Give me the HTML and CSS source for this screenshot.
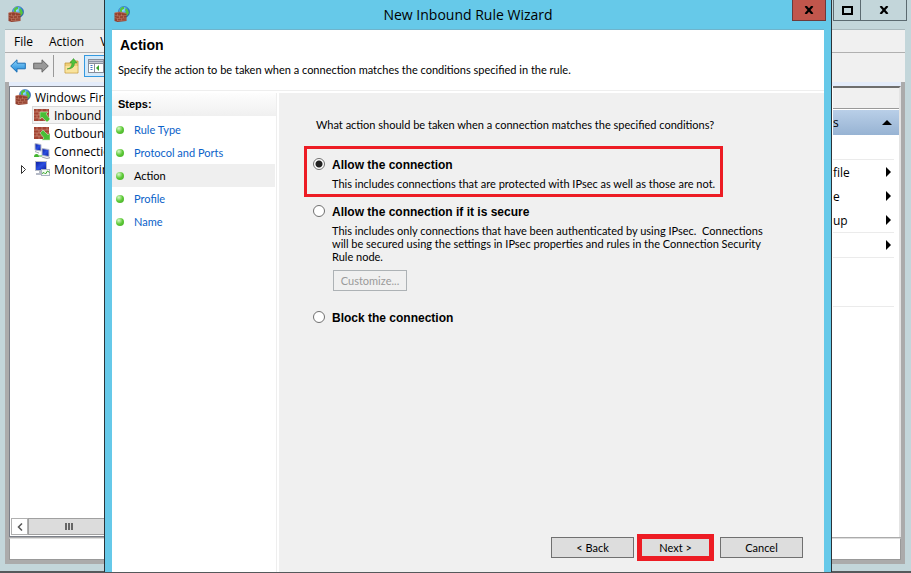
FILE: index.html
```
<!DOCTYPE html>
<html lang="en">
<head>
  <meta charset="UTF-8"/>
  <meta name="viewport" content="width=device-width, initial-scale=1.0"/>
  <title>New Inbound Rule Wizard</title>
  <link rel="stylesheet" href="styles.css">
</head>
<body>
  <svg class="defs" aria-hidden="true">
    <defs>
      <radialGradient id="globeFill" cx="0.4" cy="0.3" r="0.8">
        <stop offset="0" stop-color="#a9e4ff"/>
        <stop offset="0.5" stop-color="#2f8fe0"/>
        <stop offset="1" stop-color="#0a3c9c"/>
      </radialGradient>
      <linearGradient id="screenFill" x1="0" y1="0" x2="1" y2="1">
        <stop offset="0" stop-color="#0a1a9c"/>
        <stop offset="0.5" stop-color="#2b4fe0"/>
        <stop offset="1" stop-color="#0a1a9c"/>
      </linearGradient>
      <linearGradient id="blueFill" x1="0" y1="0" x2="0" y2="1">
        <stop offset="0" stop-color="#8fd4fa"/>
        <stop offset="1" stop-color="#1a86d8"/>
      </linearGradient>
      <symbol id="firewall" viewBox="0 0 16 16">
        <circle cx="10" cy="6" r="5.600" fill="url(#globeFill)" stroke="#2a5fa8" stroke-width="0.5"/>
        <path d="M6 3l2-2 2 0 0 2-2 1 0 2-2 0zM12 2l2 2 1 3-2 3-2-1 0-2 1-1-1-2z" fill="#54c43c"/>
        <path d="M0.500 7l5-1 7 1.500v7.500l-9 1-3-1z" fill="#93402f"/>
        <path d="M0.500 9l3 1 9-0.500M0.500 11.500l3 1 9-0.500M3.500 14.500l9-0.500M3.500 7.500v2.500M7.500 7.500v2.500M5.500 10v2.300M9.500 10v2M3.500 12.500v2.500M7.500 12.500v2" fill="none" stroke="#d79a80" stroke-width="0.4"/>
        <path d="M0.500 7l5-1 7 1.500" fill="none" stroke="#c67055" stroke-width="0.8"/>
      </symbol>
      <symbol id="wall" viewBox="0 0 16 16">
        <rect x="0" y="2" width="15" height="12" fill="#a34433"/>
        <path d="M0 5h15M0 8h15M0 11h15M3 2v3M8 2v3M13 2v3M5 5v3M10 5v3M3 8v3M8 8v3M13 8v3M5 11v3M10 11v3" stroke="#dba692" stroke-width="0.5"/>
      </symbol>
      <symbol id="inbound" viewBox="0 0 16 16">
        <use href="#wall"/>
        <path d="M6 5h8l-2 2 4 5-3 3-5-5-2 2z" fill="#48bf35" stroke="#c8eab8" stroke-width="0.6"/>
      </symbol>
      <symbol id="outbound" viewBox="0 0 16 16">
        <use href="#wall"/>
        <path d="M16 15H8l2-2-4-5 3-3 5 5 2-2z" fill="#48bf35" stroke="#c8eab8" stroke-width="0.6"/>
      </symbol>
      <symbol id="computers" viewBox="0 0 16 16">
        <path d="M1 0.500l6 1v6.500l-6-1z" fill="url(#screenFill)" stroke="#b9bdc8"/>
        <path d="M8 5.500l7 1v7l-7-1z" fill="url(#screenFill)" stroke="#b9bdc8"/>
        <path d="M8 14l5 1.500 3-1" fill="none" stroke="#a5a9b2" stroke-width="1.200"/>
        <path d="M1 8.500l4 1.500" stroke="#a5a9b2"/>
        <path d="M0 14q0-3 2.500-3t2.500 3z" fill="#42b52f"/>
        <path d="M5 13h3" stroke="#42b52f"/>
      </symbol>
      <symbol id="monitor" viewBox="0 0 16 16">
        <rect x="1.500" y="0.500" width="11" height="9" fill="url(#screenFill)" stroke="#b5bac6"/>
        <path d="M5 10h4v2h2v2H2v-2h3z" fill="#b5bac6"/>
        <rect x="7.500" y="8.500" width="8" height="6" fill="#f4fbf2" stroke="#a9b3c2"/>
        <path d="M8 12.500l2-1 1.500 1.500 2-3 2 1.500" fill="none" stroke="#35a52c"/>
      </symbol>
      <symbol id="arrow" viewBox="0 0 16 14">
        <path d="M0.700 7L7 0.800V4.200h8.300v5.600H7v3.400z"/>
      </symbol>
      <symbol id="folder" viewBox="0 0 16 16">
        <path d="M1 5h5l1-2h7v12H1z" fill="#efcf78" stroke="#c39a3c" stroke-width="0.8"/>
        <path d="M1.500 8h12v6.500h-12z" fill="#f9e39c"/>
        <path d="M3 11q5-1 5-6H6l3.500-4.500L13 5h-2.500q0 6-7.500 6z" fill="#4fc33b" stroke="#2e8e25" stroke-width="0.5"/>
      </symbol>
      <symbol id="console" viewBox="0 0 16 14">
        <rect x="0.500" y="0.500" width="15" height="13" fill="#fff" stroke="#888e9a"/>
        <path d="M1 2.500h14" stroke="#8d96a8" stroke-width="2"/>
        <path d="M1 4.500h14M6.500 4v10" stroke="#888e9a"/>
        <path d="M2.500 6.500h2M2.500 8.500h2M2.500 10.500h2" stroke="#4276c4"/>
        <path d="M11 6v6L8 9z" fill="#3aa52d"/>
      </symbol>
    </defs>
  </svg>

  <div class="desktop">
    <!-- firewall console -->
    <div class="window console">
      <header class="console-title">
        <svg class="icon"><use href="#firewall"/></svg>
        <div class="caption-buttons">
          <button class="caption" aria-label="Maximize"><svg width="11" height="9" viewBox="0 0 11 9"><rect x="1" y="1" width="9" height="7" fill="none" stroke="#000" stroke-width="2"/></svg></button>
          <button class="caption wide" aria-label="Close console"><svg width="10" height="8" viewBox="0 0 10 8"><path d="M1.500 0L8.500 8M8.500 0L1.500 8" stroke="#000" stroke-width="2.200"/></svg></button>
        </div>
      </header>
      <nav class="menubar">
        <button>File</button>
        <button>Action</button>
        <button>View</button>
      </nav>
      <div class="toolbar">
        <button aria-label="Back"><svg class="nav-arrow back"><use href="#arrow"/></svg></button>
        <button aria-label="Forward"><svg class="nav-arrow forward"><use href="#arrow"/></svg></button>
        <span class="divider"></span>
        <button aria-label="Up one level"><svg class="icon"><use href="#folder"/></svg></button>
        <button class="pressed" aria-label="Show console tree"><svg class="icon"><use href="#console"/></svg></button>
      </div>
      <div class="console-body">
        <div class="panes">
          <div class="tree-pane">
            <ul class="tree">
              <li class="root"><svg class="icon"><use href="#firewall"/></svg><span>Windows Firewall</span></li>
              <li class="selected"><svg class="icon"><use href="#inbound"/></svg><span>Inbound Rules</span></li>
              <li><svg class="icon"><use href="#outbound"/></svg><span>Outbound Rules</span></li>
              <li><svg class="icon"><use href="#computers"/></svg><span>Connection Security</span></li>
              <li class="closed"><svg class="expander" viewBox="0 0 6 9"><path d="M0.500 0.500v8l4-4z" fill="#fff" stroke="#333"/></svg><svg class="icon"><use href="#monitor"/></svg><span>Monitoring</span></li>
            </ul>
            <div class="scrollbar">
              <button aria-label="Scroll left"><svg width="6" height="8" viewBox="0 0 6 8"><path d="M5 0.500L1.500 4L5 7.500" fill="none" stroke="#555" stroke-width="1.500"/></svg></button>
              <div class="thumb"><i></i><i></i><i></i></div>
            </div>
          </div>
          <div class="actions-pane">
            <div class="pane-head"></div>
            <div class="pane-group"><span>s</span><svg width="10" height="5" viewBox="0 0 10 5"><path d="M5 0l5 5H0z"/></svg></div>
            <ul class="actions">
              <li class="gap"></li>
              <li><span>file</span><svg class="more" viewBox="0 0 5 10"><path d="M0 0l5 5-5 5z"/></svg></li>
              <li><span>e</span><svg class="more" viewBox="0 0 5 10"><path d="M0 0l5 5-5 5z"/></svg></li>
              <li><span>up</span><svg class="more" viewBox="0 0 5 10"><path d="M0 0l5 5-5 5z"/></svg></li>
              <li class="ruled"><span></span><svg class="more" viewBox="0 0 5 10"><path d="M0 0l5 5-5 5z"/></svg></li>
              <li class="gap ruled"></li>
              <li class="gap"></li>
            </ul>
          </div>
        </div>
        <div class="statusbar"></div>
      </div>
    </div>

    <div class="taskbar"></div>

    <!-- wizard -->
    <div class="window wizard">
      <header class="wizard-title">
        <svg class="icon"><use href="#firewall"/></svg>
        <h1>New Inbound Rule Wizard</h1>
        <button class="close" aria-label="Close"><svg width="10" height="8" viewBox="0 0 10 8"><path d="M1.500 0L8.500 8M8.500 0L1.500 8" stroke="#000" stroke-width="2.200"/></svg></button>
      </header>
      <div class="wizard-body">
        <div class="page-head">
          <h2>Action</h2>
          <p>Specify the action to be taken when a connection matches the conditions specified in the rule.</p>
        </div>
        <div class="columns">
          <nav class="steps">
            <h3>Steps:</h3>
            <ul>
              <li><a href="#">Rule Type</a></li>
              <li><a href="#">Protocol and Ports</a></li>
              <li class="current">Action</li>
              <li><a href="#">Profile</a></li>
              <li><a href="#">Name</a></li>
            </ul>
          </nav>
          <form class="page">
            <p class="question">What action should be taken when a connection matches the specified conditions?</p>
            <div class="option marked">
              <input type="radio" name="action" id="allow" checked>
              <div>
                <label for="allow">Allow the connection</label>
                <p>This includes connections that are protected with IPsec as well as those are not.</p>
              </div>
            </div>
            <div class="option">
              <input type="radio" name="action" id="secure">
              <div>
                <label for="secure">Allow the connection if it is secure</label>
                <p>This includes only connections that have been authenticated by using IPsec.&nbsp; Connections will be secured using the settings in IPsec properties and rules in the Connection Security Rule node.</p>
                <button type="button" class="customize" disabled>Customize...</button>
              </div>
            </div>
            <div class="option">
              <input type="radio" name="action" id="block">
              <div><label for="block">Block the connection</label></div>
            </div>
            <div class="buttons">
              <button type="button">&lt; Back</button>
              <button type="button" class="next">Next &gt;</button>
              <button type="button">Cancel</button>
            </div>
          </form>
        </div>
      </div>
    </div>
  </div>
</body>
</html>
```
FILE: styles.css
```
* {
  box-sizing: border-box;
}

body {
  margin: 0;
  font-family: Lato, "Liberation Sans", Arial, sans-serif;
  font-size: 11px;
  color: #000;
}

h1, h2, h3, p, ul {
  margin: 0;
  padding: 0;
}

ul {
  list-style: none;
}

button {
  margin: 0;
  padding: 0;
  border: none;
  background: none;
  font: inherit;
  color: inherit;
}

.defs {
  position: absolute;
  width: 0;
  height: 0;
}

.icon {
  width: 16px;
  height: 16px;
  flex: none;
}

.desktop {
  position: relative;
  height: 100vh;
  overflow: hidden;
  background-color: #c3d6da;
}

.window {
  position: absolute;
  display: flex;
  flex-direction: column;
}

.taskbar {
  position: absolute;
  left: 0;
  right: 0;
  bottom: 0;
  height: 2px;
  background-color: #55595b;
}

/* console window */
.console {
  top: 0;
  left: 0;
  right: 0;
  bottom: 2px;
  padding: 0 6px 7px 5px;
  font-family: "Open Sans", "Noto Sans", sans-serif;
  font-size: 12px;
}

.console-title {
  display: flex;
  justify-content: space-between;
  height: 29px;
  flex: none;
}

.console-title .icon {
  margin: 6px 0 0 3px;
}

.caption-buttons {
  display: flex;
  height: 21px;
  margin-right: -2px;
  border: 1px solid #5b6a70;
  border-top: none;
}

.caption {
  display: flex;
  align-items: center;
  justify-content: center;
  width: 26px;
}

.caption.wide {
  width: 46px;
  border-left: 1px solid #5b6a70;
}

.menubar {
  display: flex;
  align-items: center;
  gap: 16px;
  height: 24px;
  flex: none;
  padding-left: 9px;
  background-color: #f0f0f0;
  border-top: 1px solid #aab9bd;
  border-bottom: 1px solid #b0b0b0;
}

.toolbar {
  display: flex;
  align-items: center;
  height: 29px;
  flex: none;
  padding: 0 0 4px 5px;
  background-color: #f0f0f0;
}

.toolbar button {
  display: flex;
}

.nav-arrow {
  width: 16px;
  height: 14px;
  margin-right: 7px;
}

.back {
  fill: url(#blueFill);
  stroke: #1b6fb5;
}

.forward {
  fill: #999;
  stroke: #666;
  transform: scaleX(-1);
  margin-right: 4px;
}

.divider {
  width: 1px;
  height: 22px;
  margin-right: 10px;
  background-color: #999;
}

.toolbar .pressed {
  margin-left: 4px;
  padding: 2px 3px;
  border: 1px solid #3399e0;
  background-color: #d3e9fa;
}

.console-body {
  flex: 1;
  display: flex;
  flex-direction: column;
  gap: 1px;
  min-height: 0;
  padding: 0 4px 4px 4px;
  background-color: #ababab;
}

.panes {
  flex: 1;
  display: flex;
  justify-content: space-between;
  min-height: 0;
  border-top: 4px solid #e4ecfa;
  background-color: #fff;
}

.tree-pane {
  display: flex;
  flex-direction: column;
  justify-content: space-between;
  width: 200px;
  padding: 1px;
  border: 1px solid #7b7f88;
}

.tree {
  padding-left: 4px;
}

.tree li {
  display: flex;
  align-items: center;
  gap: 4px;
  height: 18px;
  padding-left: 19px;
  white-space: nowrap;
}

.tree .root {
  padding-left: 0;
}

.tree .selected {
  margin-left: 17px;
  padding-left: 1px;
  border: 1px solid #dadada;
  background-color: #f3f3f3;
}

.tree .closed {
  padding-left: 6px;
}

.expander {
  flex: none;
  width: 6px;
  height: 9px;
  margin-right: 3px;
}

.scrollbar {
  display: flex;
  height: 17px;
}

.scrollbar button {
  display: flex;
  align-items: center;
  justify-content: center;
  width: 17px;
  border: 1px solid #b0b0b0;
}

.thumb {
  display: flex;
  flex: 1;
  align-items: center;
  gap: 1px;
  padding-left: 36px;
  border: 1px solid #a0a0a0;
  background-color: #dcdcdc;
}

.thumb i {
  width: 2px;
  height: 7px;
  background-color: #666;
}

.actions-pane {
  width: 68px;
  border-top: 2px solid #6e6e6e;
  border-right: 2px solid #e4e4e4;
}

.pane-head {
  height: 21px;
  background-color: #f0f0f0;
  border-bottom: 1px solid #999;
}

.pane-group {
  display: flex;
  align-items: center;
  justify-content: space-between;
  height: 26px;
  padding: 0 7px 0 0;
  border-top: 1px solid #fff;
  background: linear-gradient(#b9cfe8, #97b3d3);
}

.actions {
  margin-right: 5px;
}

.actions li {
  display: flex;
  align-items: center;
  justify-content: space-between;
  height: 24px;
  padding: 0 3px 0 0;
}

.more {
  width: 5px;
  height: 10px;
}

.actions .ruled {
  height: 26px;
  border-top: 1px solid #ebebeb;
  border-bottom: 1px solid #ebebeb;
}

.actions .gap {
  height: 25px;
  border-bottom: 1px solid #ebebeb;
}

.actions .gap.ruled {
  height: 24px;
  border: none;
}

.statusbar {
  height: 22px;
  border: 1px solid #999;
  border-top-color: #ddd;
  background-color: #fff;
}

/* wizard window */
.wizard {
  top: 0;
  left: 104px;
  right: 79px;
  bottom: 1px;
  padding: 0 7px;
  border-left: 1px solid #2b3338;
  border-right: 1px solid #2b3338;
  background-color: #66c9e9;
}

.wizard-title {
  display: flex;
  height: 29px;
  flex: none;
}

.wizard-title .icon {
  margin: 6px 0 0 2px;
}

.wizard-title h1 {
  flex: 1;
  padding-left: 14px;
  font-family: "Open Sans", "Noto Sans", sans-serif;
  font-size: 14px;
  font-weight: normal;
  line-height: 29px;
  text-align: center;
}

.close {
  display: flex;
  align-items: center;
  justify-content: center;
  width: 34px;
  height: 21px;
  margin-right: -2px;
  border: 1px solid #6e3a3a;
  border-top: none;
  background-color: #c1564c;
}

.wizard-body {
  display: flex;
  flex: 1;
  flex-direction: column;
  min-height: 0;
  border-top: 1px solid #6fb4cc;
  background-color: #fff;
}

.page-head {
  height: 61px;
  padding: 7px 6px 0;
  border-bottom: 1px solid #eee;
}

.page-head h2 {
  padding-left: 2px;
  font-family: "Liberation Sans", Arial, sans-serif;
  font-size: 14px;
  line-height: 16px;
}

.page-head p {
  margin-top: 10px;
  line-height: 14px;
}

.columns {
  display: flex;
  flex: 1;
  gap: 2px;
  margin-top: 2px;
}

.steps {
  width: 165px;
  border-right: 1px solid #eee;
}

.steps h3 {
  height: 23px;
  margin-bottom: 2px;
  padding-left: 6px;
  font-family: "Liberation Sans", Arial, sans-serif;
  font-size: 11px;
  line-height: 23px;
  background: linear-gradient(#fdfdfd, #f0f0f0);
}

.steps li {
  display: flex;
  align-items: center;
  gap: 10px;
  height: 23px;
  margin-right: 1px;
  padding-left: 4px;
}

.steps li::before {
  content: "";
  width: 8px;
  height: 8px;
  border-radius: 50%;
  background: radial-gradient(circle at 35% 30%, #d8f7c8, #5cc936 50%, #45a828);
}

.steps .current {
  background-color: #efefef;
}

.steps a {
  color: #0a62c9;
  text-decoration: none;
}

.page {
  display: flex;
  flex: 1;
  flex-direction: column;
  align-items: flex-start;
  padding: 25px 21px 11px 25px;
  background-color: #f0f0f0;
}

.question {
  margin-bottom: 14px;
  padding-left: 12px;
  line-height: 14px;
}

.option {
  display: flex;
  gap: 6px;
  max-width: 465px;
  margin-bottom: 20px;
  padding-left: 9px;
}

.option.marked {
  margin-bottom: 8px;
  padding: 9px 5px 4px 6px;
  border: 3px solid #ed1c24;
}

.option input {
  appearance: none;
  flex: none;
  width: 12px;
  height: 12px;
  margin: 0 1px 0 0;
  border: 1px solid #707070;
  border-radius: 50%;
  background-color: #fff;
}

.option input:checked {
  background: radial-gradient(circle, #222 3px, #fff 4px);
}

.option label {
  display: block;
  font-family: "Liberation Sans", Arial, sans-serif;
  font-size: 12px;
  font-weight: bold;
  line-height: 14px;
}

.option p {
  margin-top: 5px;
  line-height: 13px;
}

.customize {
  width: 74px;
  height: 21px;
  margin: 7px 0 0 1px;
  border: 1px solid #adb2b5;
  color: #9a9a9a;
}

.buttons {
  display: flex;
  align-items: center;
  align-self: flex-end;
  margin-top: auto;
}

.buttons button {
  width: 83px;
  height: 21px;
  border: 1px solid #707070;
  background-color: #ddd;
}

.buttons .next {
  width: 77px;
  height: 27px;
  margin: 0 6px 0 3px;
  border: 5px solid #ed1c24;
}
```
